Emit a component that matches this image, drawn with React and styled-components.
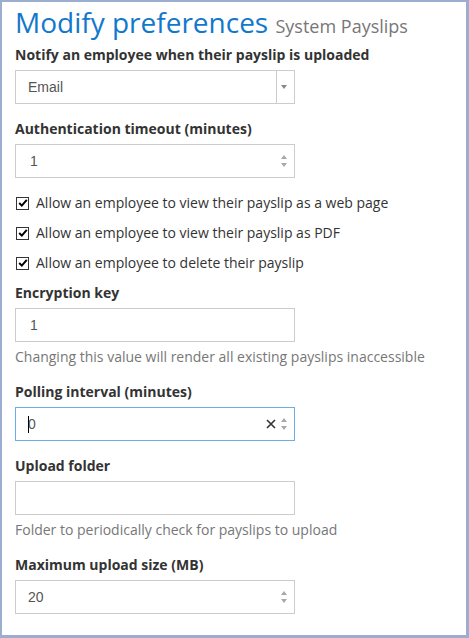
import { createGlobalStyle, styled } from "styled-components";

const GlobalStyle = createGlobalStyle`
    html, body {
        margin: 0;
        padding: 0;
        background: #fff;
    }
    * {
        box-sizing: border-box;
    }
`

export default function App(){
    return(
        <>
            <GlobalStyle />
            <SCFrame>
                <SCTitle>Modify preferences <small>System Payslips</small></SCTitle>

                <SCField>
                    <SCLabel>Notify an employee when their payslip is uploaded</SCLabel>
                    <SCControl>
                        <SCValue>Email</SCValue>
                        <SCDropdown><SCArrowDown /></SCDropdown>
                    </SCControl>
                </SCField>

                <SCField>
                    <SCLabel>Authentication timeout (minutes)</SCLabel>
                    <SCControl>
                        <SCValue $indent={2}>1</SCValue>
                        <Spinner />
                    </SCControl>
                </SCField>

                <SCCheckRow><Check />Allow an employee to view their payslip as a web page</SCCheckRow>
                <SCCheckRow><Check />Allow an employee to view their payslip as PDF</SCCheckRow>
                <SCCheckRow><Check />Allow an employee to delete their payslip</SCCheckRow>

                <SCField>
                    <SCLabel>Encryption key</SCLabel>
                    <SCControl>
                        <SCValue $indent={2}>1</SCValue>
                    </SCControl>
                    <SCHelp>Changing this value will render all existing payslips inaccessible</SCHelp>
                </SCField>

                <SCField>
                    <SCLabel>Polling interval (minutes)</SCLabel>
                    <SCControl $focused>
                        <SCValue><SCCaret />0</SCValue>
                        <SCClear viewBox="0 0 10 10">
                            <path d="M1 1 L9 9 M9 1 L1 9" stroke="#333" strokeWidth="1.6" fill="none" />
                        </SCClear>
                        <Spinner />
                    </SCControl>
                </SCField>

                <SCField>
                    <SCLabel>Upload folder</SCLabel>
                    <SCControl />
                    <SCHelp>Folder to periodically check for payslips to upload</SCHelp>
                </SCField>

                <SCField>
                    <SCLabel>Maximum upload size (MB)</SCLabel>
                    <SCControl>
                        <SCValue>20</SCValue>
                        <Spinner />
                    </SCControl>
                </SCField>
            </SCFrame>
        </>
    );
}

function Spinner(){
    return(
        <SCSpinner>
            <SCTri $up />
            <SCTri />
        </SCSpinner>
    );
}

function Check(){
    return(
        <SCBox>
            <svg width="10" height="10" viewBox="0 0 10 10">
                <path d="M1.2 5 L3.8 7.6 L8.8 1.8" stroke="#000" strokeWidth="2" fill="none" />
            </svg>
        </SCBox>
    );
}

const SCFrame = styled.div`
    height: 638px;
    overflow: hidden;

    border-style: solid;
    border-color: #9dadd0;
    border-width: 2px 3px 3px 2px;

    padding: 0 13px;

    background-color: #fff;

    font-family: 'Open Sans', sans-serif;
    color: #333;
`

const SCTitle = styled.h1`
    margin: 2px 0 5px;

    font-size: 28px;
    font-weight: 400;
    line-height: 36px;
    color: #1278cc;

    small{
        font-size: 18px;
        line-height: 1;
        color: #777;
    }
`

const SCField = styled.div`
    margin-bottom: 15px;
`

const SCLabel = styled.div`
    font-size: 14px;
    font-weight: 700;
    line-height: 20px;

    margin-bottom: 5px;
`

const SCControl = styled.div`
    width: 280px;
    height: 34px;

    border: 1px solid ${props => props.$focused ? '#66afe9' : '#ccc'};

    padding: 0 7px 0 12px;

    display: flex;
    align-items: center;

    font-family: 'Liberation Sans', Arial, sans-serif;
    font-size: 14px;
    color: #555;
`

const SCValue = styled.span`
    flex: 1;

    padding-left: ${props => props.$indent || 0}px;

    display: flex;
    align-items: center;
`

const SCCaret = styled.span`
    display: inline-block;
    width: 1px;
    height: 17px;

    margin-right: -1px;

    background-color: #000;
    position: relative;
    z-index: 1;
`

const SCDropdown = styled.div`
    width: 18px;
    height: 100%;

    margin-right: -7px;
    padding-right: 3px;

    border-left: 1px solid #ccc;

    display: flex;
    align-items: center;
    justify-content: center;
`

const SCArrowDown = styled.span`
    width: 0;
    height: 0;

    border-left: 3px solid transparent;
    border-right: 3px solid transparent;
    border-top: 4px solid #888;
`

const SCSpinner = styled.div`
    display: flex;
    flex-direction: column;
    gap: 4px;
`

const SCTri = styled.span`
    width: 0;
    height: 0;

    border-left: 3.5px solid transparent;
    border-right: 3.5px solid transparent;
    ${props => props.$up ? 'border-bottom: 4px solid #a8a8a8;' : 'border-top: 4px solid #a8a8a8;'}
`

const SCClear = styled.svg`
    width: 10px;
    height: 10px;

    margin-right: 5px;
`

const SCCheckRow = styled.div`
    height: 20px;

    margin-bottom: 10px;

    display: flex;
    align-items: center;
    gap: 7px;

    font-size: 14px;
    line-height: 20px;
    color: #333;
`

const SCBox = styled.span`
    width: 13px;
    height: 13px;

    margin-left: 1px;

    border: 1px solid #333;
    background-color: #fff;

    display: flex;
    align-items: center;
    justify-content: center;
`

const SCHelp = styled.div`
    margin-top: 5px;

    font-size: 14px;
    line-height: 20px;
    color: #777;
`
